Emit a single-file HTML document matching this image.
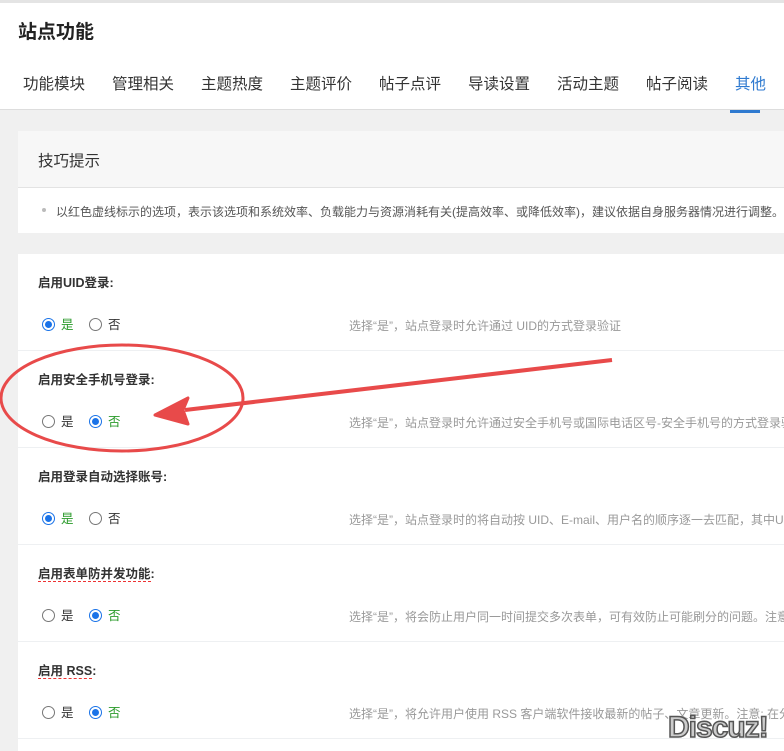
<!DOCTYPE html>
<html><head><meta charset="utf-8"><style>
*{margin:0;padding:0;box-sizing:border-box}
body{width:784px;height:751px;overflow:hidden;background:#f0f0f0;font-family:"Liberation Sans","Noto Sans CJK SC",sans-serif;position:relative}
.top{position:absolute;left:0;top:0;width:784px;height:110px;background:#fff;border-top:3px solid #e4e4e4;border-bottom:1px solid #ddd}
.title{position:absolute;left:18px;top:14px;font-size:19px;font-weight:bold;color:#222}
.tab{position:absolute;top:69px;font-size:15.5px;color:#333}
.ul{position:absolute;left:730px;top:107px;width:30px;height:3px;background:#2f7ad0}
.tips{position:absolute;left:18px;top:131px;width:766px;height:102px;background:#fff}
.tips .h{height:57px;background:#f7f7f7;border-bottom:1px solid #e3e3e3;padding:18px 0 0 20px;font-size:15.5px;color:#333}
.tips .t{padding:15px 0 0 38px;font-size:12px;color:#555;white-space:nowrap;position:relative}
.tips .t:before{content:"";position:absolute;left:24px;top:20px;width:4px;height:4px;border-radius:2px;background:#bbb}
.card{position:absolute;left:18px;top:254px;width:766px;height:497px;background:#fff}
.row{position:absolute;left:0;width:766px;height:97px;border-bottom:1px solid #eef0f2}
.lab{position:absolute;left:20px;top:18px;font-size:12.5px;font-weight:bold;color:#333}
.lab span{border-bottom:1px dashed #e33}
.r{position:absolute;top:60px;font-size:12.5px;color:#333}
.r i{display:inline-block;width:13px;height:13px;border:1px solid #777;border-radius:50%;vertical-align:-2px;margin-right:6px;position:relative}
.r i.on{border-color:#1a73e8}
.r i.on:after{content:"";position:absolute;left:2px;top:2px;width:7px;height:7px;border-radius:50%;background:#1a73e8}
.r.g{color:#2a9a2a}
.d{position:absolute;left:331px;top:63px;font-size:12px;color:#999;white-space:nowrap}
.wm{position:absolute;left:668px;top:711px;font-size:30px;font-weight:bold;color:#ccc;-webkit-text-stroke:1.5px #555;letter-spacing:-1px;font-family:"Liberation Sans",sans-serif}
</style></head><body>
<div class="top">
<div class="title">站点功能</div>
<div class="tab" style="left:23px">功能模块</div>
<div class="tab" style="left:112px">管理相关</div>
<div class="tab" style="left:201px">主题热度</div>
<div class="tab" style="left:290px">主题评价</div>
<div class="tab" style="left:379px">帖子点评</div>
<div class="tab" style="left:468px">导读设置</div>
<div class="tab" style="left:557px">活动主题</div>
<div class="tab" style="left:646px">帖子阅读</div>
<div class="tab" style="left:735px;color:#2f7ad0">其他</div>
<div class="ul"></div>
</div>
<div class="tips"><div class="h">技巧提示</div><div class="t">以红色虚线标示的选项，表示该选项和系统效率、负载能力与资源消耗有关(提高效率、或降低效率)，建议依据自身服务器情况进行调整。</div></div>
<div class="card">
<div class="row" style="top:0">
<div class="lab">启用UID登录:</div>
<div class="r g" style="left:24px"><i class="on"></i>是</div><div class="r" style="left:71px"><i></i>否</div>
<div class="d">选择“是”，站点登录时允许通过 UID的方式登录验证</div></div>
<div class="row" style="top:97px">
<div class="lab">启用安全手机号登录:</div>
<div class="r" style="left:24px"><i></i>是</div><div class="r g" style="left:71px"><i class="on"></i>否</div>
<div class="d">选择“是”，站点登录时允许通过安全手机号或国际电话区号-安全手机号的方式登录验证</div></div>
<div class="row" style="top:194px">
<div class="lab">启用登录自动选择账号:</div>
<div class="r g" style="left:24px"><i class="on"></i>是</div><div class="r" style="left:71px"><i></i>否</div>
<div class="d">选择“是”，站点登录时的将自动按 UID、E-mail、用户名的顺序逐一去匹配，其中UID</div></div>
<div class="row" style="top:291px">
<div class="lab"><span>启用表单防并发功能</span>:</div>
<div class="r" style="left:24px"><i></i>是</div><div class="r g" style="left:71px"><i class="on"></i>否</div>
<div class="d">选择“是”，将会防止用户同一时间提交多次表单，可有效防止可能刷分的问题。注意</div></div>
<div class="row" style="top:388px">
<div class="lab"><span>启用 RSS</span>:</div>
<div class="r" style="left:24px"><i></i>是</div><div class="r g" style="left:71px"><i class="on"></i>否</div>
<div class="d">选择“是”，将允许用户使用 RSS 客户端软件接收最新的帖子、文章更新。注意: 在分</div></div>
</div>
<svg style="position:absolute;left:0;top:0" width="784" height="751">
<ellipse cx="122" cy="398" rx="121" ry="53" fill="none" stroke="#e84a4a" stroke-width="3"/>
<path d="M612 360 L185 410" stroke="#e84a4a" stroke-width="4" fill="none"/>
<path d="M155 415 L188 398 L183 410 L188 424 Z" fill="#e84a4a" stroke="#e84a4a" stroke-width="3" stroke-linejoin="round"/>
</svg>
<div class="wm">Discuz!</div>
</body></html>
